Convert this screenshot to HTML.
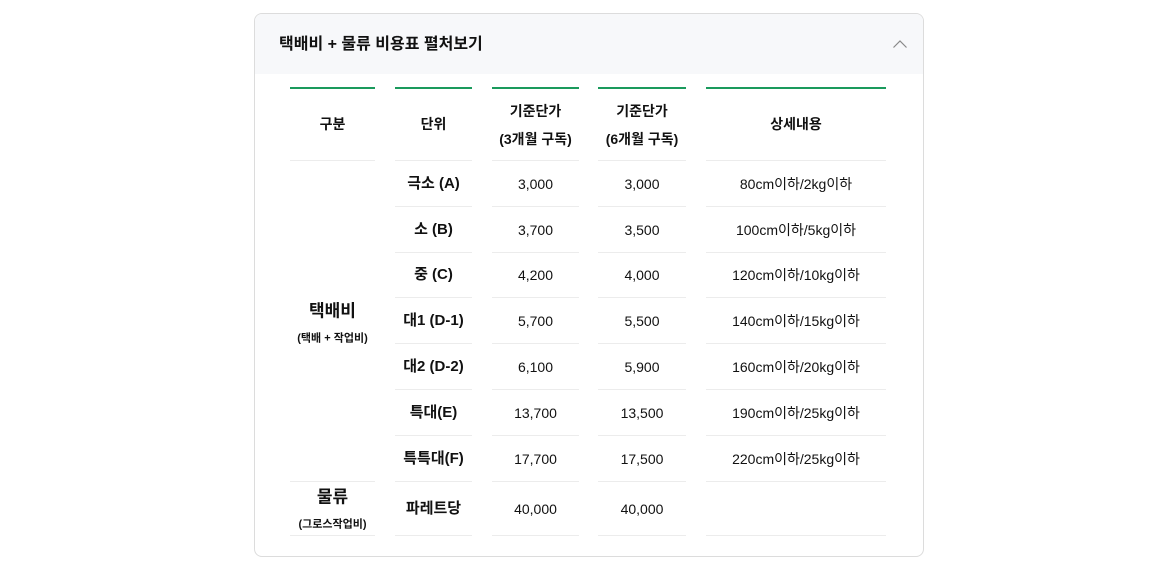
<!DOCTYPE html>
<html><head><meta charset="utf-8"><style>
*{margin:0;padding:0;box-sizing:border-box}
body{width:1157px;height:566px;background:#fff;font-family:"Liberation Sans","Noto Sans CJK KR",sans-serif;color:#111;position:relative;overflow:hidden}
.card{position:absolute;left:254px;top:13px;width:670px;height:544px;border:1px solid #dcdcdc;border-radius:8px;overflow:hidden}
.hd{position:absolute;left:0;top:0;width:100%;height:60px;background:#f7f8fa}
.t{position:absolute;left:24px;top:16px;font-size:16px;font-weight:bold;color:#111}
.a{position:absolute}
.g{position:absolute;top:87px;height:2px;background:#1a9a5c}
.l{position:absolute;height:1px;background:#ececec}
.c{position:absolute;text-align:center;transform:translateY(-50%);font-size:14px;line-height:20px}
.b{font-weight:bold}
</style></head><body>
<div class="card"><div class="hd"></div><div class="t">택배비 + 물류 비용표 펼처보기</div>
<svg class="a" style="left:637px;top:25px" width="16" height="10" viewBox="0 0 16 10"><path d="M1.5 8.5L8 2l6.5 6.5" fill="none" stroke="#888" stroke-width="1.2"/></svg></div>

<div class="g" style="left:290px;width:85px"></div>
<div class="g" style="left:395px;width:77px"></div>
<div class="g" style="left:492px;width:87px"></div>
<div class="g" style="left:598px;width:88px"></div>
<div class="g" style="left:706px;width:180px"></div>

<div class="c b" style="left:290px;width:85px;top:124px">구분</div>
<div class="c b" style="left:395px;width:77px;top:124px">단위</div>
<div class="c b" style="left:492px;width:87px;top:125px;line-height:28px">기준단가<br>(3개월 구독)</div>
<div class="c b" style="left:598px;width:88px;top:125px;line-height:28px">기준단가<br>(6개월 구독)</div>
<div class="c b" style="left:706px;width:180px;top:124px">상세내용</div>

<div class="l" style="left:290px;width:85px;top:160px"></div>
<div class="l" style="left:290px;width:85px;top:481px"></div>
<div class="l" style="left:290px;width:85px;top:535px"></div>

<div class="c b" style="left:290px;width:85px;top:325px;line-height:25px"><span style="font-size:17px">택배비</span><br><span style="font-size:11px">(택배 + 작업비)</span></div>
<div class="c b" style="left:290px;width:85px;top:511px;line-height:25px"><span style="font-size:17px">물류</span><br><span style="font-size:11px">(그로스작업비)</span></div>

<div class="l" style="left:395px;width:77px;top:160px"></div><div class="l" style="left:492px;width:87px;top:160px"></div><div class="l" style="left:598px;width:88px;top:160px"></div><div class="l" style="left:706px;width:180px;top:160px"></div>
<div class="l" style="left:395px;width:77px;top:206px"></div><div class="l" style="left:492px;width:87px;top:206px"></div><div class="l" style="left:598px;width:88px;top:206px"></div><div class="l" style="left:706px;width:180px;top:206px"></div>
<div class="l" style="left:395px;width:77px;top:252px"></div><div class="l" style="left:492px;width:87px;top:252px"></div><div class="l" style="left:598px;width:88px;top:252px"></div><div class="l" style="left:706px;width:180px;top:252px"></div>
<div class="l" style="left:395px;width:77px;top:297px"></div><div class="l" style="left:492px;width:87px;top:297px"></div><div class="l" style="left:598px;width:88px;top:297px"></div><div class="l" style="left:706px;width:180px;top:297px"></div>
<div class="l" style="left:395px;width:77px;top:343px"></div><div class="l" style="left:492px;width:87px;top:343px"></div><div class="l" style="left:598px;width:88px;top:343px"></div><div class="l" style="left:706px;width:180px;top:343px"></div>
<div class="l" style="left:395px;width:77px;top:389px"></div><div class="l" style="left:492px;width:87px;top:389px"></div><div class="l" style="left:598px;width:88px;top:389px"></div><div class="l" style="left:706px;width:180px;top:389px"></div>
<div class="l" style="left:395px;width:77px;top:435px"></div><div class="l" style="left:492px;width:87px;top:435px"></div><div class="l" style="left:598px;width:88px;top:435px"></div><div class="l" style="left:706px;width:180px;top:435px"></div>
<div class="l" style="left:395px;width:77px;top:481px"></div><div class="l" style="left:492px;width:87px;top:481px"></div><div class="l" style="left:598px;width:88px;top:481px"></div><div class="l" style="left:706px;width:180px;top:481px"></div>
<div class="l" style="left:395px;width:77px;top:535px"></div><div class="l" style="left:492px;width:87px;top:535px"></div><div class="l" style="left:598px;width:88px;top:535px"></div><div class="l" style="left:706px;width:180px;top:535px"></div>

<div class="c b" style="left:395px;width:77px;top:184px;font-size:15px">극소 (A)</div><div class="c" style="left:492px;width:87px;top:184px">3,000</div><div class="c" style="left:598px;width:88px;top:184px">3,000</div><div class="c" style="left:706px;width:180px;top:184px">80cm이하/2kg이하</div>
<div class="c b" style="left:395px;width:77px;top:230px;font-size:15px">소 (B)</div><div class="c" style="left:492px;width:87px;top:230px">3,700</div><div class="c" style="left:598px;width:88px;top:230px">3,500</div><div class="c" style="left:706px;width:180px;top:230px">100cm이하/5kg이하</div>
<div class="c b" style="left:395px;width:77px;top:275px;font-size:15px">중 (C)</div><div class="c" style="left:492px;width:87px;top:275px">4,200</div><div class="c" style="left:598px;width:88px;top:275px">4,000</div><div class="c" style="left:706px;width:180px;top:275px">120cm이하/10kg이하</div>
<div class="c b" style="left:395px;width:77px;top:321px;font-size:15px">대1 (D-1)</div><div class="c" style="left:492px;width:87px;top:321px">5,700</div><div class="c" style="left:598px;width:88px;top:321px">5,500</div><div class="c" style="left:706px;width:180px;top:321px">140cm이하/15kg이하</div>
<div class="c b" style="left:395px;width:77px;top:367px;font-size:15px">대2 (D-2)</div><div class="c" style="left:492px;width:87px;top:367px">6,100</div><div class="c" style="left:598px;width:88px;top:367px">5,900</div><div class="c" style="left:706px;width:180px;top:367px">160cm이하/20kg이하</div>
<div class="c b" style="left:395px;width:77px;top:413px;font-size:15px">특대(E)</div><div class="c" style="left:492px;width:87px;top:413px">13,700</div><div class="c" style="left:598px;width:88px;top:413px">13,500</div><div class="c" style="left:706px;width:180px;top:413px">190cm이하/25kg이하</div>
<div class="c b" style="left:395px;width:77px;top:459px;font-size:15px">특특대(F)</div><div class="c" style="left:492px;width:87px;top:459px">17,700</div><div class="c" style="left:598px;width:88px;top:459px">17,500</div><div class="c" style="left:706px;width:180px;top:459px">220cm이하/25kg이하</div>
<div class="c b" style="left:395px;width:77px;top:509px;font-size:15px">파레트당</div><div class="c" style="left:492px;width:87px;top:509px">40,000</div><div class="c" style="left:598px;width:88px;top:509px">40,000</div>
</body></html>
